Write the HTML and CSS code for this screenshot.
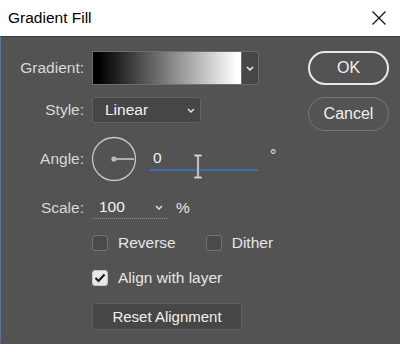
FILE: index.html
```html
<!DOCTYPE html>
<html lang="en">
<head>
  <meta charset="UTF-8">
  <title>Gradient Fill</title>
  <link rel="stylesheet" href="styles.css">
</head>
<body>
  <div class="titlebar">
    <span class="title">Gradient Fill</span>
    <svg class="close" width="14" height="14" viewBox="0 0 14 14">
      <path d="M0.5 0.5 L13.5 13.5 M13.5 0.5 L0.5 13.5" stroke="#111" stroke-width="1.2" fill="none"/>
    </svg>
  </div>

  <div class="dialog">
    <div class="form">
      <div class="row row-gradient">
        <label class="label">Gradient:</label>
        <div class="gradient-pick">
          <div class="swatch"></div>
          <div class="swatch-drop">
            <svg width="8" height="5" viewBox="0 0 8 5"><path d="M1 1 L4 4 L7 1" stroke="#f0f0f0" stroke-width="1.5" fill="none"/></svg>
          </div>
        </div>
      </div>

      <div class="row row-style">
        <label class="label">Style:</label>
        <div class="select">
          <span>Linear</span>
          <svg width="8" height="5" viewBox="0 0 8 5"><path d="M1 1 L4 4 L7 1" stroke="#e8e8e8" stroke-width="1.4" fill="none"/></svg>
        </div>
      </div>

      <div class="row row-angle">
        <label class="label">Angle:</label>
        <svg class="dial" width="46" height="46" viewBox="0 0 46 46">
          <circle cx="23" cy="23" r="21.5" stroke="#c8c8c8" stroke-width="1.3" fill="none"/>
          <line x1="23" y1="23" x2="43" y2="23" stroke="#c8c8c8" stroke-width="1.6"/>
          <circle cx="23" cy="23" r="2.6" fill="#bdbdbd"/>
        </svg>
        <div class="angle-input">
          <span>0</span>
          <svg class="ibeam" width="10" height="25" viewBox="0 0 10 25">
            <path d="M1 1.5 H9 M5 1.5 V23.5 M1 23.5 H9" stroke="#6a6a6a" stroke-width="3" fill="none"/>
            <path d="M1.5 1.5 H8.5 M5 1.5 V23.5 M1.5 23.5 H8.5" stroke="#dedede" stroke-width="1.4" fill="none"/>
          </svg>
        </div>
        <span class="degree">°</span>
      </div>

      <div class="row row-scale">
        <label class="label">Scale:</label>
        <div class="scale-input">
          <span>100</span>
          <svg width="8" height="5" viewBox="0 0 8 5"><path d="M1 1 L4 4 L7 1" stroke="#e8e8e8" stroke-width="1.4" fill="none"/></svg>
        </div>
        <span class="unit">%</span>
      </div>

      <div class="row row-checks indent">
        <div class="check"><span class="box"></span>Reverse</div>
        <div class="check check-dither"><span class="box"></span>Dither</div>
      </div>

      <div class="row row-align indent">
        <div class="check">
          <span class="box box-on">
            <svg width="12" height="10" viewBox="0 0 12 10"><path d="M1.5 5 L4.5 8 L10.5 1.5" stroke="#1a1a1a" stroke-width="2.2" fill="none"/></svg>
          </span>Align with layer
        </div>
      </div>

      <div class="row row-reset indent">
        <button class="reset">Reset Alignment</button>
      </div>
    </div>

    <div class="actions">
      <button class="btn btn-ok">OK</button>
      <button class="btn btn-cancel">Cancel</button>
    </div>
  </div>
</body>
</html>
```

FILE: styles.css
```css
body {
  margin: 0;
  width: 400px;
  height: 344px;
  overflow: hidden;
  background: #535353;
  font-family: "Liberation Sans", Arial, sans-serif;
  font-size: 15.5px;
  color: #dcdcdc;
}

.titlebar {
  height: 36px;
  background: #ffffff;
  display: flex;
  align-items: center;
  justify-content: space-between;
  padding: 0 14px 0 8px;
}

.title {
  color: #000;
  font-size: 15.5px;
}

.close {
  display: block;
}

.dialog {
  border-top: 1px solid #3c3c3c;
  border-left: 1px solid #587595;
  height: 307px;
  display: flex;
  justify-content: space-between;
  padding-top: 14px;
  box-sizing: border-box;
}

.form {
  display: flex;
  flex-direction: column;
}

.row {
  display: flex;
  align-items: center;
}

.label {
  width: 83px;
  margin-right: 8px;
  text-align: right;
  color: #d8d8d8;
}

.indent {
  padding-left: 91px;
}

/* gradient picker */
.row-gradient {
  height: 34px;
}

.gradient-pick {
  display: flex;
  height: 34px;
}

.swatch {
  width: 150px;
  height: 34px;
  box-sizing: border-box;
  border: 1px solid #6f6f6f;
  background: linear-gradient(to right, #000 0%, #000 4%, #ffffff 97%);
}

.swatch-drop {
  width: 17px;
  height: 34px;
  box-sizing: border-box;
  border: 1px solid #6a6a6a;
  border-left: none;
  border-radius: 0 3px 3px 0;
  background: #464646;
  display: flex;
  align-items: center;
  justify-content: center;
}

.swatch-drop svg {
  display: block;
}

/* style select */
.row-style {
  margin-top: 12px;
  height: 26px;
}

.select {
  width: 109px;
  height: 26px;
  box-sizing: border-box;
  border: 1px solid #626262;
  border-radius: 3px;
  background: #464646;
  display: flex;
  align-items: center;
  justify-content: space-between;
  padding: 0 5px 0 12px;
  color: #f2f2f2;
}

.select svg {
  display: block;
}

/* angle */
.row-angle {
  margin-top: 14px;
  height: 44px;
}

.dial {
  display: block;
  margin-left: -1px;
}

.angle-input {
  position: relative;
  width: 108px;
  height: 22px;
  margin-left: 13px;
  margin-top: 2px;
  box-sizing: border-box;
  border-bottom: 2px solid #3a6db0;
  padding-left: 3px;
  color: #f4f4f4;
}

.ibeam {
  position: absolute;
  left: 43px;
  top: 5px;
}

.degree {
  margin-left: 12px;
  margin-top: -6px;
  font-size: 16px;
  color: #e6e6e6;
}

/* scale */
.row-scale {
  margin-top: 15px;
  height: 23px;
}

.scale-input {
  width: 75px;
  height: 23px;
  box-sizing: border-box;
  border-bottom: 1px dotted #8c8c8c;
  display: flex;
  align-items: center;
  justify-content: space-between;
  padding: 0 4px 0 7px;
  color: #f4f4f4;
}

.scale-input svg {
  display: block;
}

.unit {
  margin-left: 9px;
  color: #e6e6e6;
}

/* checkboxes */
.row-checks {
  margin-top: 16px;
  height: 16px;
}

.row-align {
  margin-top: 19px;
  height: 16px;
}

.check {
  display: flex;
  align-items: center;
  color: #e6e6e6;
}

.check-dither {
  margin-left: 30px;
}

.box {
  width: 16px;
  height: 16px;
  box-sizing: border-box;
  border: 1px solid #727272;
  border-radius: 3px;
  background: #4a4a4a;
  margin-right: 10px;
  display: flex;
  align-items: center;
  justify-content: center;
}

.box-on {
  background: #e8e8e8;
  border-color: #c8c8c8;
}

.box-on svg {
  display: block;
}

/* reset */
.row-reset {
  margin-top: 17px;
}

.reset {
  width: 150px;
  height: 27px;
  border: 1px solid #5e5e5e;
  border-radius: 3px;
  background: #464646;
  color: #f0f0f0;
  font-family: "Liberation Sans", Arial, sans-serif;
  font-size: 15px;
  padding: 0;
}

/* right buttons */
.actions {
  display: flex;
  flex-direction: column;
  gap: 12px;
  margin-right: 11px;
}

.btn {
  width: 81px;
  height: 34px;
  border-radius: 17px;
  background: transparent;
  color: #f0f0f0;
  font-family: "Liberation Sans", Arial, sans-serif;
  font-size: 16px;
  padding: 0;
}

.btn-ok {
  border: 2px solid #e8e8e8;
}

.btn-cancel {
  border: 1px solid #767676;
}
```
